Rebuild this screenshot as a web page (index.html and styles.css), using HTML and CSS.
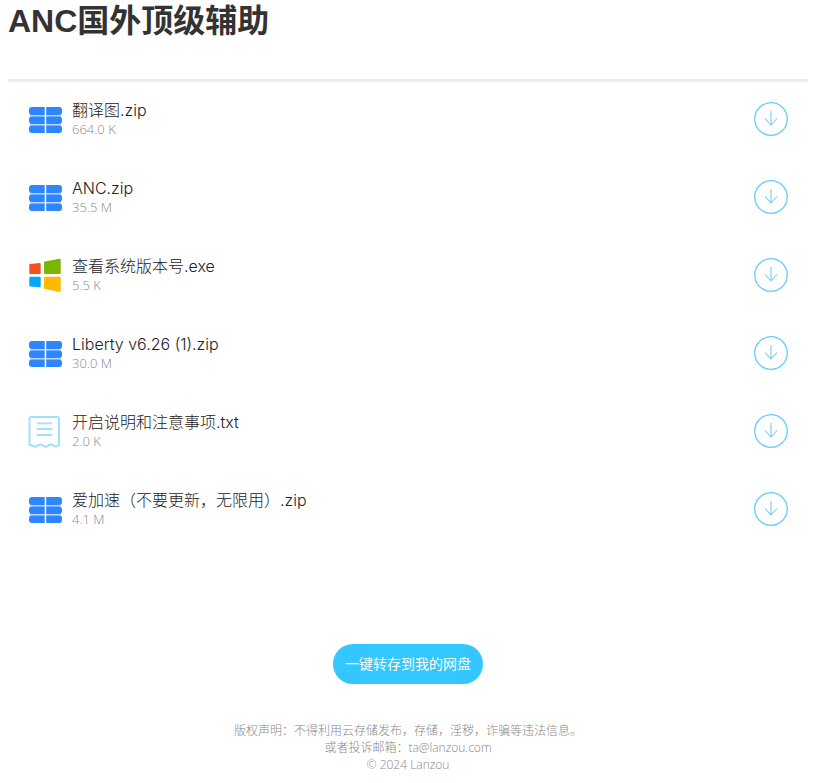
FILE: index.html

```html
<!DOCTYPE html>
<html lang="zh-CN">
<head>
  <meta charset="UTF-8" />
  <title>ANC国外顶级辅助</title>
  <link rel="stylesheet" href="styles.css">
</head>
<body>
  <svg class="icon-defs" width="0" height="0">
    <symbol id="icon-zip" viewBox="-1 0 34 26">
      <path fill="#bcd8ff" d="M1 7h31v13H1z"/>
      <rect fill="#2d86ff" x="0" y="0" width="33" height="8" rx="3"/>
      <rect fill="#2d86ff" x="0" y="9.500" width="33" height="7.500" rx="3"/>
      <rect fill="#2d86ff" x="0" y="18.500" width="33" height="7.500" rx="3"/>
      <path fill="#fff" d="M15.700 0h1.500v26h-1.500z"/>
    </symbol>
    <symbol id="icon-exe" viewBox="0 0 34 34">
      <path fill="#f4511e" stroke="#f4511e" stroke-width="2" stroke-linejoin="round" d="M2.300 7 11.700 6v9H2.300z"/>
      <path fill="#7cb500" stroke="#7cb500" stroke-width="2" stroke-linejoin="round" d="M17 4.500 31.700 1.700V15H17z"/>
      <path fill="#03a9f4" stroke="#03a9f4" stroke-width="2" stroke-linejoin="round" d="M2.300 19.700h9.400v8.600L2.300 27.500z"/>
      <path fill="#ffb900" stroke="#ffb900" stroke-width="2" stroke-linejoin="round" d="M17 19.700h14.700V33L17 30z"/>
    </symbol>
    <symbol id="icon-txt" viewBox="0 0 34 34">
      <path fill="none" stroke="#a3e0ff" stroke-width="2" d="M5 3h24a2 2 0 0 1 2 2v26c-2.500 2-4 2-5.500.6s-3.500-1.400-5 0-4 1.400-5.500 0-3.500-1.400-5 0-3.500 1.400-5.500 0-3 .6-3-.6V5a2 2 0 0 1 2-2z"/>
      <path fill="none" stroke="#a3e0ff" stroke-width="1.800" d="M8.700 9.300h15.600M8.700 15h15.600M8.700 21h15.600"/>
    </symbol>
    <symbol id="icon-down" viewBox="0 0 34 34">
      <circle cx="17" cy="17" r="16.300" fill="none" stroke="#66ccff" stroke-width="1.300"/>
      <path fill="none" stroke="#77ccf5" stroke-width="1.100" d="M17 9v14M11 16.500l6 6.500 6-6.500"/>
    </symbol>
  </svg>

  <h1 class="title">ANC国外顶级辅助</h1>
  <hr class="rule">

  <div class="file-list">
    <div class="file-row">
      <svg class="file-icon zip"><use href="#icon-zip"/></svg>
      <div class="file-info">
        <div class="file-name">翻译图.zip</div>
        <div class="file-size">664.0 K</div>
      </div>
      <svg class="down-icon"><use href="#icon-down"/></svg>
    </div>
    <div class="file-row">
      <svg class="file-icon zip"><use href="#icon-zip"/></svg>
      <div class="file-info">
        <div class="file-name">ANC.zip</div>
        <div class="file-size">35.5 M</div>
      </div>
      <svg class="down-icon"><use href="#icon-down"/></svg>
    </div>
    <div class="file-row">
      <svg class="file-icon"><use href="#icon-exe"/></svg>
      <div class="file-info">
        <div class="file-name">查看系统版本号.exe</div>
        <div class="file-size">5.5 K</div>
      </div>
      <svg class="down-icon"><use href="#icon-down"/></svg>
    </div>
    <div class="file-row">
      <svg class="file-icon zip"><use href="#icon-zip"/></svg>
      <div class="file-info">
        <div class="file-name">Liberty v6.26 (1).zip</div>
        <div class="file-size">30.0 M</div>
      </div>
      <svg class="down-icon"><use href="#icon-down"/></svg>
    </div>
    <div class="file-row">
      <svg class="file-icon"><use href="#icon-txt"/></svg>
      <div class="file-info">
        <div class="file-name">开启说明和注意事项.txt</div>
        <div class="file-size">2.0 K</div>
      </div>
      <svg class="down-icon"><use href="#icon-down"/></svg>
    </div>
    <div class="file-row">
      <svg class="file-icon zip"><use href="#icon-zip"/></svg>
      <div class="file-info">
        <div class="file-name">爱加速（不要更新，无限用）.zip</div>
        <div class="file-size">4.1 M</div>
      </div>
      <svg class="down-icon"><use href="#icon-down"/></svg>
    </div>
  </div>

  <div class="save-wrap">
    <a class="save-btn">一键转存到我的网盘</a>
  </div>

  <div class="footer">
    <p>版权声明：不得利用云存储发布，存储，淫秽，诈骗等违法信息。</p>
    <p>或者投诉邮箱：ta@lanzou.com</p>
    <p>© 2024 Lanzou</p>
  </div>
</body>
</html>
```

FILE: styles.css

```css
body {
  font-family: "Open Sans", "Noto Sans CJK SC", sans-serif;
  font-weight: 300;
  background-color: #fff;
  width: 800px;
  margin: 0;
  padding: 0 8px;
  color: #333;
}

.icon-defs {
  position: absolute;
}

.title {
  font-family: "Liberation Sans", "Noto Sans CJK SC", sans-serif;
  font-size: 32px;
  font-weight: bold;
  line-height: 40px;
  color: #333;
  margin: 0;
  padding-top: 1px;
  padding-bottom: 38px;
}

.rule {
  border: none;
  height: 3px;
  background-color: #eee;
  margin: 0;
}

.file-list {
  padding: 0 20px;
}

.file-row {
  display: flex;
  align-items: center;
  box-sizing: border-box;
  height: 78px;
  padding-bottom: 4px;
}

.file-icon {
  width: 34px;
  height: 34px;
  flex-shrink: 0;
}

.file-icon.zip {
  height: 26px;
  margin-top: 2px;
}

.file-info {
  flex: 1;
  margin-left: 10px;
}

.file-name {
  font-family: Inter, "Noto Sans CJK SC", sans-serif;
  font-size: 16px;
  line-height: 20px;
  color: #222;
}

.file-size {
  font-size: 13px;
  line-height: 18px;
  color: #888;
}

.down-icon {
  width: 34px;
  height: 34px;
  flex-shrink: 0;
}

.save-wrap {
  display: flex;
  justify-content: center;
  margin-top: 94px;
}

.save-btn {
  width: 150px;
  height: 40px;
  line-height: 40px;
  border-radius: 20px;
  background-color: #33c6ff;
  color: #fff;
  font-size: 14px;
  font-weight: 400;
  text-align: center;
}

.footer {
  margin-top: 38px;
  text-align: center;
  font-size: 12px;
  line-height: 17px;
  color: #888;
}

.footer p {
  margin: 0;
}
```
